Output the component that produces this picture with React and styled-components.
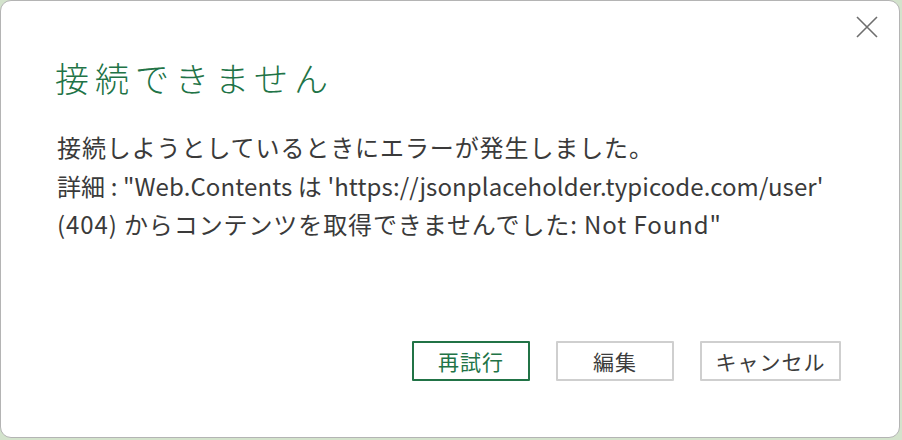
import styled, { createGlobalStyle } from "styled-components";

const GlobalStyle = createGlobalStyle`
  html, body {
    margin: 0;
    padding: 0;
    background: #d3e3cc;
  }
  body {
    font-family: "Noto Sans CJK JP", "Noto Sans", sans-serif;
  }
`;

const Dialog = styled.div`
  box-sizing: border-box;
  width: 900px;
  height: 438px;
  background: #ffffff;
  border: 1px solid #b4b4b4;
  border-radius: 11px;
  display: flex;
  flex-direction: column;
  overflow: hidden;
`;

const TopBar = styled.div`
  display: flex;
  justify-content: flex-end;
  padding: 13px 19px 0 0;
`;

const CloseButton = styled.button`
  width: 26px;
  height: 26px;
  padding: 0;
  border: none;
  background: transparent;
  display: flex;
  align-items: center;
  justify-content: center;
  color: #6e6e6e;
`;

const Title = styled.h1`
  margin: 16px 0 0 54px;
  font-size: 34px;
  font-weight: 300;
  letter-spacing: 6px;
  color: #217346;
  line-height: 44px;
`;

const Message = styled.div`
  margin: 28px 0 0 56px;
  font-size: 24px;
  line-height: 38.5px;
  color: #3a3a3a;
`;

const Line = styled.div`
  letter-spacing: ${(p) => p.$spacing || 0}px;
`;

const Footer = styled.div`
  margin-top: auto;
  display: flex;
  justify-content: flex-end;
  gap: 26px;
  padding: 0 58px 56px 0;
`;

const Button = styled.button`
  box-sizing: border-box;
  height: 40px;
  width: ${(p) => p.$width || 118}px;
  padding: 0;
  background: #ffffff;
  border: ${(p) => (p.$primary ? "2px solid #217346" : "2px solid #cfcfcf")};
  border-radius: 1px;
  font-family: inherit;
  font-size: 21px;
  color: ${(p) => (p.$primary ? "#217346" : "#3c3c3c")};
  letter-spacing: 1px;
`;

const App = () => {
  return (
    <>
      <GlobalStyle />
      <Dialog>
        <TopBar>
          <CloseButton aria-label="閉じる">
            <svg width="24" height="24" viewBox="0 0 24 24">
              <path
                d="M2 2 L22 22 M22 2 L2 22"
                stroke="currentColor"
                strokeWidth="1.6"
                fill="none"
              />
            </svg>
          </CloseButton>
        </TopBar>
        <Title>接続できません</Title>
        <Message>
          <Line $spacing={0.9}>接続しようとしているときにエラーが発生しました。</Line>
          <Line $spacing={0.1}>
            詳細 : "Web.Contents は 'https://jsonplaceholder.typicode.com/user'
          </Line>
          <Line $spacing={0.9}>(404) からコンテンツを取得できませんでした: Not Found"</Line>
        </Message>
        <Footer>
          <Button $primary>再試行</Button>
          <Button>編集</Button>
          <Button $width={141}>キャンセル</Button>
        </Footer>
      </Dialog>
    </>
  );
};

export default App;
